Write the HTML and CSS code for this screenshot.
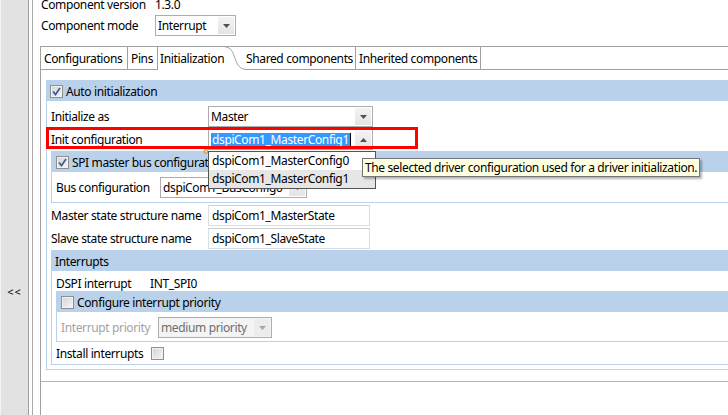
FILE: index.html
```html
<!DOCTYPE html>
<html lang="en">
<head>
    <meta charset="UTF-8">
    <title>Component Inspector</title>
    <link rel="stylesheet" href="styles.css">
</head>
<body>
<div class="window">
    <div class="side">
        <div class="strip"><span class="collapse">&lt;&lt;</span></div>
        <div class="rule"></div>
    </div>
    <div class="editor">
        <div class="prop prop-version">
            <span class="prop-label">Component version</span>
            <span>1.3.0</span>
        </div>
        <div class="prop prop-mode">
            <span class="prop-label">Component mode</span>
            <div class="combo combo-mode">
                <span class="combo-text">Interrupt</span>
                <span class="combo-btn"><svg width="7" height="4"><polygon points="0,0 7,0 3.5,4"/></svg></span>
            </div>
        </div>
        <div class="folder">
            <div class="tabs">
                <div class="tab tab-conf">Configurations</div>
                <div class="tab tab-pins">Pins</div>
                <div class="tab tab-init tab-active">
                    Initialization
                    <svg class="tab-curve" width="25" height="24"><path d="M0 0.5 C8 0.5 10 4 12.5 11 S17 23.5 25 23.5"/></svg>
                </div>
                <div class="tab tab-shared">Shared components</div>
                <div class="tab tab-inherited">Inherited components</div>
                <div class="tab-fill"></div>
            </div>
            <div class="page">
                <div class="group group-auto">
                    <div class="band band-auto">
                        <span class="check checked"><svg width="11" height="11"><path d="M2 5.5 L4.5 8.5 L9 2"/></svg></span>
                        <span>Auto initialization</span>
                    </div>
                    <div class="group-body">
                        <div class="row">
                            <span class="label label-main">Initialize as</span>
                            <div class="combo combo-wide">
                                <span class="combo-text">Master</span>
                                <span class="combo-btn"><svg width="7" height="4"><polygon points="0,0 7,0 3.5,4"/></svg></span>
                            </div>
                        </div>
                        <div class="row row-marked">
                            <span class="label label-main">Init configuration</span>
                            <div class="combo combo-wide combo-open">
                                <span class="combo-text"><span class="selection">dspiCom1_MasterConfig1</span><span class="caret"></span></span>
                                <span class="combo-btn"><svg width="7" height="4"><polygon points="0,4 7,4 3.5,0"/></svg></span>
                            </div>
                            <span class="marker"><svg width="6" height="7"><path d="M3 0 V2"/><circle cx="3" cy="4.5" r="1.8"/></svg></span>
                            <div class="highlight"></div>
                            <ul class="dropdown">
                                <li>dspiCom1_MasterConfig0</li>
                                <li class="hover">dspiCom1_MasterConfig1</li>
                            </ul>
                            <div class="tooltip">The selected driver configuration used for a driver initialization.</div>
                        </div>
                        <div class="group group-spi">
                            <div class="band band-inner">
                                <span class="check checked"><svg width="11" height="11"><path d="M2 5.5 L4.5 8.5 L9 2"/></svg></span>
                                <span>SPI master bus configuration</span>
                            </div>
                            <div class="group-body spi-body">
                                <div class="row">
                                    <span class="label label-bus">Bus configuration</span>
                                    <div class="combo combo-bus">
                                        <span class="combo-text">dspiCom1_BusConfig0</span>
                                        <span class="combo-btn"><svg width="7" height="4"><polygon points="0,0 7,0 3.5,4"/></svg></span>
                                    </div>
                                </div>
                            </div>
                        </div>
                        <div class="row row-state">
                            <span class="label label-main">Master state structure name</span>
                            <div class="field">dspiCom1_MasterState</div>
                        </div>
                        <div class="row">
                            <span class="label label-main">Slave state structure name</span>
                            <div class="field">dspiCom1_SlaveState</div>
                        </div>
                        <div class="group group-irq">
                            <div class="band band-plain">Interrupts</div>
                            <div class="group-body irq-body">
                                <div class="line">
                                    <span class="label label-dspi">DSPI interrupt</span>
                                    <span>INT_SPI0</span>
                                </div>
                                <div class="group group-prio">
                                    <div class="band band-inner">
                                        <span class="check"></span>
                                        <span>Configure interrupt priority</span>
                                    </div>
                                    <div class="group-body prio-body">
                                        <div class="row">
                                            <span class="label label-prio disabled-text">Interrupt priority</span>
                                            <div class="combo combo-prio combo-disabled">
                                                <span class="combo-text">medium priority</span>
                                                <span class="combo-btn"><svg width="7" height="4"><polygon points="0,0 7,0 3.5,4"/></svg></span>
                                            </div>
                                        </div>
                                    </div>
                                </div>
                                <div class="line line-install">
                                    <span class="label label-install">Install interrupts</span>
                                    <span class="check"></span>
                                </div>
                            </div>
                        </div>
                    </div>
                </div>
            </div>
        </div>
    </div>
</div>
</body>
</html>
```

FILE: styles.css
```css
html,body{
    margin:0;
    padding:0;
}
body{
    width:728px;
    height:415px;
    overflow:hidden;
    background:#fff;
    font-family:"Noto Sans","Open Sans",sans-serif;
    font-size:12px;
    letter-spacing:-0.37px;
    color:#000;
}
.window{
    display:flex;
    width:732px;
    height:415px;
}

/* collapsed side panel */
.side{
    display:flex;
    flex:none;
    width:40px;
}
.strip{
    width:27px;
    background:#e2e2e2;
    border-left:1px solid #f4f4f4;
    border-right:1px solid #9d9d9d;
    text-align:center;
}
.collapse{
    display:block;
    margin-top:284px;
    line-height:16px;
    font-size:11px;
    letter-spacing:1px;
}
.side .rule{
    width:0;
    margin-left:3px;
    border-left:1px solid #a8a8a8;
}

.editor{
    flex:1;
    min-width:0;
    display:flex;
    flex-direction:column;
}
.prop{
    display:flex;
    align-items:center;
    padding-left:1px;
    white-space:nowrap;
}
.prop-version{
    margin-top:-3px;
    height:16px;
    line-height:16px;
}
.prop-mode{
    margin-top:2px;
}
.prop-label{
    flex:none;
    width:114px;
}

/* combos and fields */
.combo{
    display:flex;
    flex:none;
    box-sizing:border-box;
    height:21px;
    border:1px solid #acacac;
    background:#fff;
    white-space:nowrap;
}
.combo-text{
    flex:1;
    padding-left:2px;
    line-height:19px;
    overflow:hidden;
}
.combo-btn{
    width:16px;
    margin:1px;
    background:linear-gradient(#f3f3f3,#e4e4e4);
    display:flex;
    align-items:center;
    justify-content:center;
}
.combo-btn svg{
    fill:#505050;
}
.combo-mode{
    width:81px;
}
.combo-wide{
    width:165px;
}
.combo-bus{
    width:147px;
}
.combo-prio{
    width:114px;
}
.combo-disabled{
    background:#f4f4f4;
    border-color:#adadad;
    color:#6d6d6d;
}
.combo-disabled .combo-btn{
    background:#ececec;
}
.combo-disabled .combo-btn svg{
    fill:#a8a8a8;
}
.combo-open .combo-text{
    padding-left:2px;
    display:flex;
    align-items:center;
}
.selection{
    background:#3399ff;
    color:#fff;
    line-height:14px;
    padding:0 1px;
}
.caret{
    width:1px;
    height:14px;
    background:#000;
}
.field{
    flex:none;
    box-sizing:border-box;
    width:162px;
    height:21px;
    border:1px solid #d9dee4;
    border-top-color:#c9ced4;
    padding-left:3px;
    line-height:19px;
    white-space:nowrap;
}

/* tab folder */
.folder{
    flex:1;
    margin-top:10px;
    border-left:1px solid #a0a0a0;
    display:flex;
    flex-direction:column;
}
.tabs{
    display:flex;
    border-top:1px solid #a0a0a0;
    height:23px;
}
.tab{
    flex:none;
    box-sizing:border-box;
    height:23px;
    padding:2px 0 0 3px;
    line-height:20px;
    border-right:1px solid #a0a0a0;
    border-bottom:1px solid #a0a0a0;
    white-space:nowrap;
}
.tab-conf{ width:87px; }
.tab-pins{ width:30px; }
.tab-init{
    width:87px;
    padding-left:2px;
}
.tab-shared{
    width:111px;
    padding-left:1px;
}
.tab-inherited{ width:125px; }
.tab-active{
    position:relative;
    border-right:none;
    border-bottom-color:#fff;
}
.tab-curve{
    position:absolute;
    left:64px;
    top:-1px;
    fill:none;
    stroke:#a0a0a0;
    stroke-width:1;
}
.tab-fill{
    flex:1;
    border-bottom:1px solid #a0a0a0;
}
.page{
    box-sizing:border-box;
    height:312px;
    padding:10px 0 0 5px;
    border-bottom:1px solid #b4b4b4;
}

/* groups */
.group{
    border:1px solid #b9d1ea;
    border-right:none;
}
.band{
    display:flex;
    align-items:center;
    gap:3px;
    height:20px;
    background:#b9d1ea;
    white-space:nowrap;
}
.band-auto{ padding-left:3px; }
.band-inner{ padding-left:4px; }
.band-plain{ padding-left:3px; }
.group-body{
    padding:5px 0 4px 4px;
}
.group-spi{ margin-top:1px; }
.group-irq{ margin-top:1px; }
.irq-body{ padding:0 0 3px 4px; }
.prio-body{ padding:5px 0 3px 4px; }

.row{
    display:flex;
    align-items:center;
    height:21px;
    white-space:nowrap;
}
.row + .row{
    margin-top:2px;
}
.row-state{
    margin-top:2px;
}
.line{
    display:flex;
    align-items:center;
    height:16px;
    margin-top:4px;
    white-space:nowrap;
}
.line-install{
    margin-top:3px;
}
.label{ flex:none; }
.label-main{ width:157px; }
.label-bus{ width:104px; }
.label-dspi{ width:94px; }
.label-install{ width:95px; }
.label-prio{ width:97px; }
.disabled-text{ color:#a3a3a3; }

/* checkboxes */
.check{
    box-sizing:border-box;
    flex:none;
    width:13px;
    height:13px;
    border:1px solid #8e8f8f;
    background:linear-gradient(135deg,#cfd2d6,#f7f7f7);
    box-shadow:inset 0 0 0 1px #f2f2f2;
    display:flex;
    align-items:center;
    justify-content:center;
}
.check svg{
    fill:none;
    stroke:#3b5a9e;
    stroke-width:1.7;
}

/* open drop down, annotation and tooltip */
.row-marked{
    position:relative;
}
.highlight{
    position:absolute;
    left:-5px;
    top:-2px;
    width:372px;
    height:22px;
    box-sizing:border-box;
    border:3px solid #ff0000;
    z-index:2;
}
.marker{
    position:absolute;
    left:152px;
    top:12px;
    width:6px;
    height:7px;
}
.marker svg{
    fill:none;
    stroke:#e89a2c;
    stroke-width:1.2;
}
.dropdown{
    position:absolute;
    left:157px;
    top:22px;
    width:168px;
    margin:0;
    padding:0;
    list-style:none;
    box-sizing:border-box;
    border:1px solid #555;
    background:#fff;
    z-index:3;
}
.dropdown li{
    height:18px;
    line-height:18px;
    padding-left:3px;
}
.dropdown .hover{
    background:#e6e6e6;
}
.tooltip{
    position:absolute;
    left:311px;
    top:29px;
    height:19px;
    box-sizing:border-box;
    padding:0 2px;
    line-height:17px;
    border:1px solid #767676;
    background:#ffffe1;
    box-shadow:2px 2px 2px rgba(0,0,0,0.3);
    white-space:nowrap;
    z-index:4;
}
```
